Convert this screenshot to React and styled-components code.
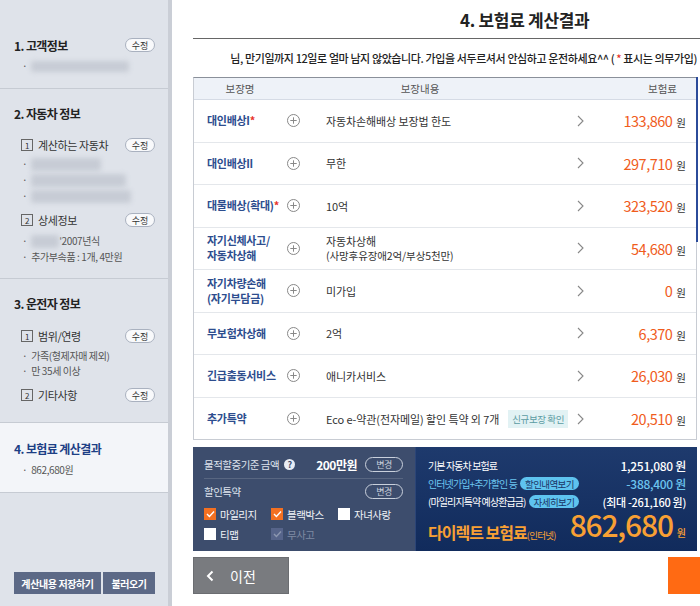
import React from 'react'
import styled, { createGlobalStyle } from 'styled-components'

const GlobalStyle = createGlobalStyle`
  html, body { margin: 0; padding: 0; }
  body {
    font-family: "Noto Sans CJK KR", "Noto Sans", sans-serif;
    background: #fff;
    color: #222;
  }
`

const Page = styled.div`
  display: flex;
  width: 700px;
  height: 606px;
  overflow: hidden;
`

/* ---------- sidebar ---------- */

const Sidebar = styled.div`
  width: 168px;
  flex-shrink: 0;
  background: #dfe3ea;
  border-right: 4px solid #caced6;
  display: flex;
  flex-direction: column;
`

const Section = styled.div`
  box-sizing: border-box;
  height: ${p => p.$h}px;
  padding: ${p => p.$top}px 13px 0 14px;
  border-bottom: 1px solid #c6cbd3;
  background: ${p => (p.$active ? '#f3f5f9' : 'transparent')};
`

const SecHead = styled.div`
  display: flex;
  align-items: center;
  justify-content: space-between;
  height: 16px;
  font-size: 12px;
  font-weight: 700;
  letter-spacing: -0.6px;
  color: ${p => (p.$active ? '#1d3f85' : '#222')};
`

const EditBtn = styled.span`
  box-sizing: border-box;
  width: 30px;
  height: 14px;
  border: 1px solid #a9b1bf;
  border-radius: 8px;
  background: #f8f9fb;
  font-size: 9px;
  font-weight: 400;
  color: #333;
  display: flex;
  align-items: center;
  justify-content: center;
  letter-spacing: 0;
`

const SubHead = styled.div`
  margin-top: ${p => p.$mt}px;
  display: flex;
  align-items: center;
  justify-content: space-between;
  height: 18px;
  padding-left: 7px;
  font-size: 11px;
  color: #333;
  letter-spacing: -0.4px;
`

const SubLabel = styled.span`
  display: flex;
  align-items: center;
`

const NumBox = styled.span`
  box-sizing: border-box;
  width: 12px;
  height: 12px;
  border: 1px solid #666;
  font-size: 8px;
  display: inline-flex;
  align-items: center;
  justify-content: center;
  margin-right: 5px;
  color: #333;
`

const Bullets = styled.div`
  margin-top: ${p => p.$mt}px;
  padding-left: 8px;
  font-size: 10px;
  color: #555;
  line-height: ${p => p.$lh || 16}px;
  letter-spacing: -0.4px;
`

const Bullet = styled.div`
  display: flex;
  align-items: center;
  white-space: nowrap;
  &::before {
    content: '·';
    margin-right: 4px;
  }
`

const Blur = styled.span`
  display: inline-block;
  width: ${p => p.$w}px;
  height: ${p => p.$hh || 11}px;
  background: #c7ccd5;
  filter: blur(2.5px);
  border-radius: 3px;
`

const SideFoot = styled.div`
  flex: 1;
  display: flex;
  align-items: flex-end;
  gap: 2px;
  padding: 0 13px 12px 14px;
`

const SideBtn = styled.div`
  width: ${p => p.$w}px;
  height: 22px;
  background: #5c6986;
  color: #fff;
  font-size: 10px;
  font-weight: 700;
  display: flex;
  align-items: center;
  justify-content: center;
  letter-spacing: -0.4px;
`

/* ---------- main ---------- */

const Main = styled.div`
  flex: 1;
  min-width: 0;
  padding: 0 3px 0 21px;
  display: flex;
  flex-direction: column;
`

const TitleBar = styled.div`
  height: 38px;
  margin-right: -3px;
  border-bottom: 1px solid #666;
  display: flex;
  align-items: center;
  padding-left: 267px;
  font-size: 17px;
  font-weight: 700;
  color: #222;
  letter-spacing: -0.3px;
`

const Notice = styled.div`
  margin-top: 11px;
  text-align: right;
  font-size: 11px;
  font-weight: 500;
  line-height: 16px;
  color: #222;
  letter-spacing: -0.4px;
  white-space: nowrap;
`

const Red = styled.span`
  color: #e8332a;
`

const TableBox = styled.div`
  position: relative;
  margin-top: 11px;
  height: 363px;
  box-sizing: border-box;
  border: 1px solid #c8ccd3;
  border-top: 1px solid #8a909a;
`

const ScrollThumb = styled.div`
  position: absolute;
  right: -2px;
  top: -1px;
  width: 2px;
  height: 165px;
  background: #2b4b9a;
`

const HeadRow = styled.div`
  display: grid;
  grid-template-columns: 92px 268px 1fr;
  align-items: center;
  height: 21px;
  background: #eef2f8;
  border-bottom: 1px solid #d5dbe5;
  font-size: 10.5px;
  color: #555;
  span { text-align: center; }
  span:last-child { text-align: right; padding-right: 19px; }
`

const Row = styled.div`
  display: grid;
  grid-template-columns: 92px 40px 1fr 24px 104px;
  align-items: center;
  height: 42.5px;
  box-sizing: border-box;
  border-bottom: ${p => (p.$last ? 'none' : '1px solid #e4e7eb')};
`

const Name = styled.div`
  padding-left: 13px;
  font-size: 11px;
  font-weight: 700;
  color: #2d4d8e;
  line-height: 15px;
  letter-spacing: -0.3px;
  white-space: nowrap;
`

const Content = styled.div`
  display: flex;
  align-items: center;
  justify-content: space-between;
  font-size: 11px;
  color: #333;
  line-height: 14px;
  letter-spacing: -0.1px;
  white-space: nowrap;
  small { font-size: 10.5px; }
`

const NewBadge = styled.span`
  background: #e2f2f4;
  color: #5b9ca3;
  font-size: 9.5px;
  padding: 2px 4px;
  letter-spacing: -0.4px;
`

const Price = styled.div`
  text-align: right;
  padding-right: 10px;
  font-size: 14.5px;
  color: #f05c1c;
  letter-spacing: -0.5px;
  span {
    font-size: 10.5px;
    color: #333;
    margin-left: 4px;
    letter-spacing: 0;
  }
`

const IconCell = styled.div`
  display: flex;
  align-items: center;
  justify-content: ${p => p.$center ? 'center' : 'flex-start'};
`

const PlusIcon = () => (
  <svg width="13" height="13" viewBox="0 0 13 13" style={{ marginLeft: 1 }}>
    <circle cx="6.5" cy="6.5" r="6" fill="none" stroke="#888" strokeWidth="1" />
    <path d="M6.5 3.3v6.4M3.3 6.5h6.4" stroke="#888" strokeWidth="1" />
  </svg>
)

const Chevron = () => (
  <svg width="7" height="12" viewBox="0 0 7 12">
    <path d="M1 1l5 5-5 5" fill="none" stroke="#888" strokeWidth="1.1" />
  </svg>
)

/* ---------- summary panel ---------- */

const Summary = styled.div`
  margin-top: 7px;
  height: 104px;
  display: flex;
`

const LeftPanel = styled.div`
  width: 222px;
  box-sizing: border-box;
  background: #3d4d6d;
  padding: 9px 12px 0 11px;
`

const PanelRow = styled.div`
  display: flex;
  align-items: center;
  height: 16px;
  margin-top: ${p => p.$mt || 0}px;
  font-size: 10.5px;
  color: #dfe4ee;
  letter-spacing: -0.5px;
`

const Help = styled.span`
  width: 11px;
  height: 11px;
  border-radius: 50%;
  background: #e8ecf4;
  color: #3d4d6d;
  font-size: 9px;
  font-weight: 700;
  display: inline-flex;
  align-items: center;
  justify-content: center;
  margin-left: 5px;
`

const Amount = styled.span`
  margin-left: auto;
  font-size: 12px;
  font-weight: 700;
  color: #fff;
  margin-right: 8px;
`

const OutlineBtn = styled.span`
  box-sizing: border-box;
  width: 38px;
  height: 15px;
  border: 1px solid #c9d0dc;
  border-radius: 8px;
  font-size: 9px;
  color: #c9d0dc;
  display: inline-flex;
  align-items: center;
  justify-content: center;
  margin-left: ${p => (p.$auto ? 'auto' : '0')};
`

const Divider = styled.div`
  margin-top: 6px;
  height: 1px;
  background: rgba(255, 255, 255, 0.14);
`

const CheckGrid = styled.div`
  display: grid;
  grid-template-columns: 67px 67px 67px;
  row-gap: 6px;
  margin-top: 8px;
`

const CheckItem = styled.div`
  display: flex;
  align-items: center;
  height: 14px;
  font-size: 10.5px;
  letter-spacing: -0.5px;
  color: ${p => (p.$disabled ? '#7f8aa3' : '#f1f3f8')};
`

const Box = styled.span`
  width: 12px;
  height: 12px;
  margin-right: 4px;
  display: inline-flex;
  align-items: center;
  justify-content: center;
  background: ${p => (p.$on ? '#f37021' : p.$disabled ? '#56648a' : '#fff')};
`

const Check = ({ color = '#fff' }) => (
  <svg width="9" height="8" viewBox="0 0 9 8">
    <path d="M1 4l2.4 2.4L8 1.5" fill="none" stroke={color} strokeWidth="1.4" />
  </svg>
)

const RightPanel = styled.div`
  flex: 1;
  box-sizing: border-box;
  background: linear-gradient(180deg, #1e3a6d 0%, #112b5c 100%);
  border-left: 1px solid #2c4577;
  padding: 11px 11px 0 12px;
`

const SumRow = styled.div`
  display: flex;
  align-items: center;
  height: 15px;
  margin-top: ${p => p.$mt || 0}px;
  font-size: 10px;
  letter-spacing: -0.9px;
  white-space: nowrap;
  color: ${p => p.$color || '#fff'};
`

const SumValue = styled.span`
  margin-left: auto;
  font-size: ${p => p.$size || 12}px;
  font-weight: 500;
  letter-spacing: -0.3px;
  color: ${p => p.$color || '#fff'};
`

const Pill = styled.span`
  margin-left: 3px;
  height: 13px;
  padding: 0 5px;
  border-radius: 7px;
  background: #5ec3ef;
  color: #1b3566;
  font-size: 9.5px;
  letter-spacing: -0.6px;
  display: inline-flex;
  align-items: center;
`

const FinalRow = styled.div`
  display: flex;
  align-items: flex-end;
  margin-top: 7px;
  height: 32px;
  color: #f8a034;
`

const FinalLabel = styled.span`
  font-size: 16px;
  font-weight: 700;
  letter-spacing: -1px;
  line-height: 20px;
  margin-bottom: 3px;
  white-space: nowrap;
  small {
    font-size: 9.5px;
    font-weight: 400;
    letter-spacing: -0.7px;
  }
`

const FinalValue = styled.span`
  margin-left: auto;
  font-size: 30px;
  font-weight: 500;
  line-height: 30px;
  letter-spacing: -1.2px;
  small {
    font-size: 10px;
    color: #f8a034;
    margin-left: 4px;
    letter-spacing: 0;
  }
`

/* ---------- footer ---------- */

const Footer = styled.div`
  margin-top: 6px;
  margin-right: -3px;
  height: 37px;
  display: flex;
  justify-content: space-between;
`

const PrevBtn = styled.div`
  width: 96px;
  box-sizing: border-box;
  background: #797b7f;
  border: 1px solid #6b6d71;
  color: #fff;
  font-size: 14px;
  display: flex;
  align-items: center;
  padding-left: 12px;
  gap: 16px;
`

const NextBtn = styled.div`
  width: 32px;
  background: #ff6a13;
`

const rows = [
  { name: <>대인배상I<Red>*</Red></>, content: '자동차손해배상 보장법 한도', price: '133,860' },
  { name: '대인배상II', content: '무한', price: '297,710' },
  { name: <>대물배상(확대)<Red>*</Red></>, content: '10억', price: '323,520' },
  { name: <>자기신체사고/<br />자동차상해</>, content: <span>자동차상해<br /><small>(사망후유장애2억/부상5천만)</small></span>, price: '54,680' },
  { name: <>자기차량손해<br />(자기부담금)</>, content: '미가입', price: '0' },
  { name: '무보험차상해', content: '2억', price: '6,370' },
  { name: '긴급출동서비스', content: '애니카서비스', price: '26,030' },
  { name: '추가특약', content: 'Eco e-약관(전자메일) 할인 특약 외 7개', badge: true, price: '20,510' },
]

export default function App() {
  return (
    <>
      <GlobalStyle />
      <Page>
        <Sidebar>
          <Section $h={89} $top={37}>
            <SecHead>1. 고객정보<EditBtn>수정</EditBtn></SecHead>
            <Bullets $mt={5}>
              <Bullet><Blur $w={98} /></Bullet>
            </Bullets>
          </Section>

          <Section $h={190} $top={16}>
            <SecHead>2. 자동차 정보</SecHead>
            <SubHead $mt={15}>
              <SubLabel><NumBox>1</NumBox>계산하는 자동차</SubLabel>
              <EditBtn>수정</EditBtn>
            </SubHead>
            <Bullets $mt={2}>
              <Bullet><Blur $w={70} $hh={13} /></Bullet>
              <Bullet><Blur $w={95} $hh={13} /></Bullet>
              <Bullet><Blur $w={100} $hh={13} /></Bullet>
            </Bullets>
            <SubHead $mt={7}>
              <SubLabel><NumBox>2</NumBox>상세정보</SubLabel>
              <EditBtn>수정</EditBtn>
            </SubHead>
            <Bullets $mt={4}>
              <Bullet><Blur $w={28} $hh={13} />'2007년식</Bullet>
              <Bullet>추가부속품 : 1개, 4만원</Bullet>
            </Bullets>
          </Section>

          <Section $h={144} $top={16}>
            <SecHead>3. 운전자 정보</SecHead>
            <SubHead $mt={16}>
              <SubLabel><NumBox>1</NumBox>범위/연령</SubLabel>
              <EditBtn>수정</EditBtn>
            </SubHead>
            <Bullets $mt={3} $lh={15}>
              <Bullet>가족(형제자매 제외)</Bullet>
              <Bullet>만 35세 이상</Bullet>
            </Bullets>
            <SubHead $mt={8}>
              <SubLabel><NumBox>2</NumBox>기타사항</SubLabel>
              <EditBtn>수정</EditBtn>
            </SubHead>
          </Section>

          <Section $h={70} $top={17} $active>
            <SecHead $active>4. 보험료 계산결과</SecHead>
            <Bullets $mt={6}>
              <Bullet>862,680원</Bullet>
            </Bullets>
          </Section>

          <SideFoot>
            <SideBtn $w={87}>계산내용 저장하기</SideBtn>
            <SideBtn $w={52}>불러오기</SideBtn>
          </SideFoot>
        </Sidebar>

        <Main>
          <TitleBar>4. 보험료 계산결과</TitleBar>
          <Notice>
            님, 만기일까지 12일로 얼마 남지 않았습니다. 가입을 서두르셔서 안심하고 운전하세요^^ ( <Red>*</Red> 표시는 의무가입)
          </Notice>

          <TableBox>
            <ScrollThumb />
            <HeadRow>
              <span>보장명</span>
              <span>보장내용</span>
              <span>보험료</span>
            </HeadRow>
            {rows.map((r, i) => (
              <Row key={i} $last={i === rows.length - 1}>
                <Name>{r.name}</Name>
                <IconCell><PlusIcon /></IconCell>
                <Content>
                  {r.content}
                  {r.badge && <NewBadge>신규보장 확인</NewBadge>}
                </Content>
                <IconCell $center><Chevron /></IconCell>
                <Price>{r.price}<span>원</span></Price>
              </Row>
            ))}
          </TableBox>

          <Summary>
            <LeftPanel>
              <PanelRow>
                물적할증기준 금액<Help>?</Help>
                <Amount>200만원</Amount>
                <OutlineBtn>변경</OutlineBtn>
              </PanelRow>
              <Divider />
              <PanelRow $mt={4}>
                할인특약
                <OutlineBtn $auto>변경</OutlineBtn>
              </PanelRow>
              <CheckGrid>
                <CheckItem><Box $on><Check /></Box>마일리지</CheckItem>
                <CheckItem><Box $on><Check /></Box>블랙박스</CheckItem>
                <CheckItem><Box />자녀사랑</CheckItem>
                <CheckItem><Box />티맵</CheckItem>
                <CheckItem $disabled><Box $disabled><Check color="#8c97b0" /></Box>무사고</CheckItem>
              </CheckGrid>
            </LeftPanel>

            <RightPanel>
              <SumRow>
                기본 자동차 보험료
                <SumValue>1,251,080 원</SumValue>
              </SumRow>
              <SumRow $mt={3} $color="#6cc5f0">
                인터넷가입+추가할인 등<Pill>할인내역보기</Pill>
                <SumValue $color="#6cc5f0">-388,400 원</SumValue>
              </SumRow>
              <SumRow $mt={3}>
                (마일리지특약 예상환급금)<Pill>자세히보기</Pill>
                <SumValue $size={11}>(최대 -261,160 원)</SumValue>
              </SumRow>
              <FinalRow>
                <FinalLabel>다이렉트 보험료<small>(인터넷)</small></FinalLabel>
                <FinalValue>862,680<small>원</small></FinalValue>
              </FinalRow>
            </RightPanel>
          </Summary>

          <Footer>
            <PrevBtn>
              <svg width="8" height="12" viewBox="0 0 8 12">
                <path d="M6.5 1.5L2 6l4.5 4.5" fill="none" stroke="#fff" strokeWidth="2" />
              </svg>
              이전
            </PrevBtn>
            <NextBtn />
          </Footer>
        </Main>
      </Page>
    </>
  )
}
